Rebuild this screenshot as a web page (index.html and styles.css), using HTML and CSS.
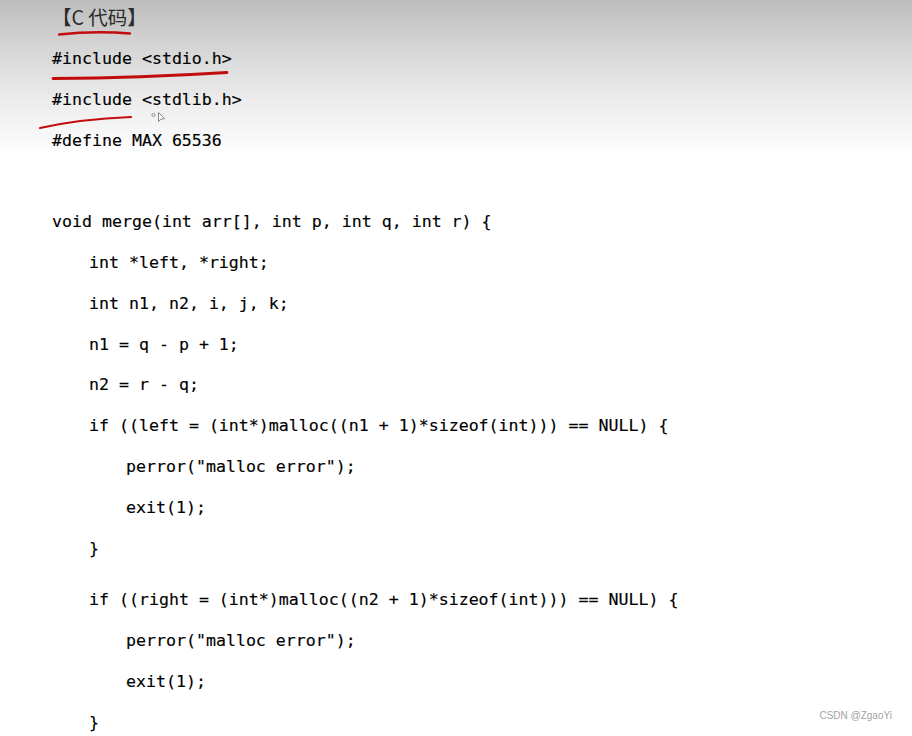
FILE: index.html
```html
<!DOCTYPE html>
<html lang="zh">
<head>
<meta charset="utf-8">
<title>C 代码</title>
<link rel="stylesheet" href="styles.css">
</head>
<body>
<div class="page">
  <div class="title">【C 代码】</div>
  <div class="code">
    <div class="line">#include &lt;stdio.h&gt;</div>
    <div class="line">#include &lt;stdlib.h&gt;</div>
    <div class="line">#define MAX 65536</div>
    <div class="line"></div>
    <div class="line">void merge(int arr[], int p, int q, int r) {</div>
    <div class="line i1">int *left, *right;</div>
    <div class="line i1">int n1, n2, i, j, k;</div>
    <div class="line i1">n1 = q - p + 1;</div>
    <div class="line i1">n2 = r - q;</div>
    <div class="line i1">if ((left = (int*)malloc((n1 + 1)*sizeof(int))) == NULL) {</div>
    <div class="line i2">perror("malloc error");</div>
    <div class="line i2">exit(1);</div>
    <div class="line i1">}</div>
    <div class="line i1 gap">if ((right = (int*)malloc((n2 + 1)*sizeof(int))) == NULL) {</div>
    <div class="line i2">perror("malloc error");</div>
    <div class="line i2">exit(1);</div>
    <div class="line i1">}</div>
  </div>
  <svg class="marks" width="912" height="160" viewBox="0 0 912 160">
    <path d="M59 34.5 Q95 30.5 130 33.5" fill="none" stroke="#c30d0d" stroke-width="2.4" stroke-linecap="round"/>
    <path d="M53 78.5 Q140 78 227 72.5" fill="none" stroke="#c30d0d" stroke-width="2.8" stroke-linecap="round"/>
    <path d="M40 128 Q80 119 131 117" fill="none" stroke="#c30d0d" stroke-width="2.1" stroke-linecap="round"/>
    <circle cx="153.5" cy="115" r="1.6" fill="none" stroke="#888" stroke-width="0.9"/>
    <path d="M158.5 112.5 L158.5 121.5 L160.8 119.3 L164.5 118.5 Z" fill="#fff" stroke="#777" stroke-width="0.9" stroke-linejoin="round"/>
  </svg>
  <div class="watermark">CSDN @ZgaoYi</div>
</div>
</body>
</html>
```
FILE: styles.css
```css
html, body {
  margin: 0;
  padding: 0;
}
body {
  width: 912px;
  height: 736px;
  overflow: hidden;
  background: #fff;
}
.page {
  position: relative;
  width: 912px;
  height: 736px;
  overflow: hidden;
  background: linear-gradient(to bottom, #bdbdbd 0px, #d6d6d6 50px, #ececec 100px, #fbfbfb 145px, #ffffff 155px, #ffffff 100%);
}
.title {
  height: 39px;
  line-height: 33px;
  padding-left: 52px;
  font-family: "Noto Sans CJK SC", "Noto Sans", sans-serif;
  font-size: 19.5px;
  color: #2a2a2a;
}
.code {
  font-family: "DejaVu Sans Mono", "Liberation Mono", monospace;
  font-size: 16.6px;
  color: #000;
  -webkit-text-stroke: 0.15px #000;
  padding-left: 52px;
}
.line {
  height: 40.8px;
  line-height: 40.8px;
  white-space: pre;
}
.i1 {
  padding-left: 37px;
}
.i2 {
  padding-left: 74px;
}
.gap {
  margin-top: 11px;
}
.marks {
  position: absolute;
  left: 0;
  top: 0;
}
.watermark {
  position: absolute;
  right: 20px;
  top: 709px;
  font-family: "Liberation Sans", Arial, sans-serif;
  font-size: 10px;
  line-height: 14px;
  color: #a3a3a3;
}
```
